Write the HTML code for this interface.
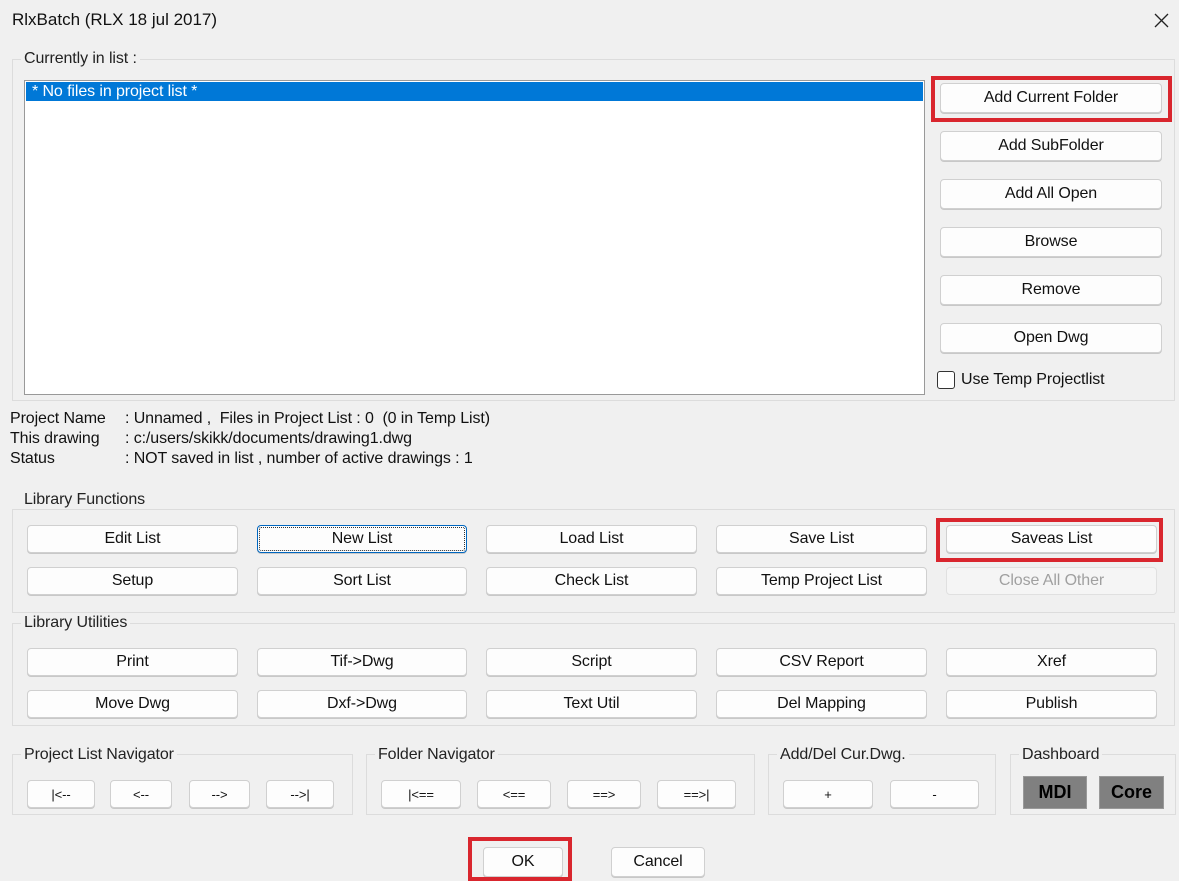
<!DOCTYPE html>
<html><head><meta charset="utf-8"><style>
*{box-sizing:border-box;margin:0;padding:0}
body{width:1179px;height:879px;background:#f0f0f0;font-family:"Liberation Sans",sans-serif;font-size:16px;color:#111;position:relative;overflow:hidden;letter-spacing:-0.1px}
.a{position:absolute}
.g{position:absolute;border:1px solid #dcdcdc}
.gl{position:absolute;background:#f0f0f0;padding:0 3px;color:#222;line-height:18px}
.b{position:absolute;background:#fdfdfd;border:1px solid #d0d0d0;border-radius:4px;text-align:center;color:#111;display:flex;align-items:center;justify-content:center;box-shadow:0 1px 0 #c8c8c8}
.r{position:absolute;border:4px solid #d9262e}
.t{position:absolute;white-space:nowrap;line-height:19px}
.d{position:absolute;background:#808080;border:1px solid #999;font-weight:bold;font-size:18px;display:flex;align-items:center;justify-content:center;color:#000;letter-spacing:0}
</style></head><body>
<div class="t" style="left:12px;top:10px;font-size:17px;letter-spacing:0">RlxBatch (RLX 18 jul 2017)</div>
<svg class="a" style="left:1154px;top:13px" width="15" height="15"><path d="M1 1L14 14M14 1L1 14" stroke="#222" stroke-width="1.3"/></svg>

<div class="g" style="left:12px;top:59px;width:1163px;height:342px"></div>
<div class="gl" style="left:21px;top:50px">Currently in list :</div>
<div class="a" style="left:24px;top:80px;width:901px;height:315px;background:#fff;border:1px solid #999"></div>
<div class="a" style="left:26px;top:82px;width:897px;height:19px;background:#0078d7"></div>
<div class="t" style="left:32px;top:82px;color:#fff">* No files in project list *</div>

<div class="b" style="left:940px;top:83px;width:222px;height:30px">Add Current Folder</div>
<div class="r" style="left:931px;top:76px;width:241px;height:46px"></div>
<div class="b" style="left:940px;top:131px;width:222px;height:30px">Add SubFolder</div>
<div class="b" style="left:940px;top:179px;width:222px;height:30px">Add All Open</div>
<div class="b" style="left:940px;top:227px;width:222px;height:30px">Browse</div>
<div class="b" style="left:940px;top:275px;width:222px;height:30px">Remove</div>
<div class="b" style="left:940px;top:323px;width:222px;height:30px">Open Dwg</div>
<div class="a" style="left:937px;top:371px;width:18px;height:18px;border:1px solid #333;background:#fff;border-radius:3px"></div>
<div class="t" style="left:961px;top:370px">Use Temp Projectlist</div>

<div class="t" style="left:10px;top:409px">Project Name</div>
<div class="t" style="left:10px;top:429px">This drawing</div>
<div class="t" style="left:10px;top:449px">Status</div>
<div class="t" style="left:125px;top:409px">: Unnamed ,&nbsp; Files in Project List : 0 &nbsp;(0 in Temp List)</div>
<div class="t" style="left:125px;top:429px">: c:/users/skikk/documents/drawing1.dwg</div>
<div class="t" style="left:125px;top:449px">: NOT saved in list , number of active drawings : 1</div>

<div class="g" style="left:12px;top:509px;width:1163px;height:104px"></div>
<div class="gl" style="left:21px;top:491px">Library Functions</div>
<div class="b" style="left:27px;top:525px;width:211px;height:28px">Edit List</div>
<div class="b" style="left:257px;top:525px;width:210px;height:28px;border-color:#0067c0;outline:1px dotted #333;outline-offset:-3px">New List</div>
<div class="b" style="left:486px;top:525px;width:211px;height:28px">Load List</div>
<div class="b" style="left:716px;top:525px;width:211px;height:28px">Save List</div>
<div class="b" style="left:946px;top:525px;width:211px;height:28px">Saveas List</div>
<div class="r" style="left:936px;top:518px;width:227px;height:44px"></div>
<div class="b" style="left:27px;top:567px;width:211px;height:28px">Setup</div>
<div class="b" style="left:257px;top:567px;width:210px;height:28px">Sort List</div>
<div class="b" style="left:486px;top:567px;width:211px;height:28px">Check List</div>
<div class="b" style="left:716px;top:567px;width:211px;height:28px">Temp Project List</div>
<div class="b" style="left:946px;top:567px;width:211px;height:28px;background:#f5f5f5;color:#a0a0a0;border-color:#e0e0e0;box-shadow:none">Close All Other</div>

<div class="g" style="left:12px;top:623px;width:1163px;height:103px"></div>
<div class="gl" style="left:21px;top:614px">Library Utilities</div>
<div class="b" style="left:27px;top:648px;width:211px;height:28px">Print</div>
<div class="b" style="left:257px;top:648px;width:210px;height:28px">Tif-&gt;Dwg</div>
<div class="b" style="left:486px;top:648px;width:211px;height:28px">Script</div>
<div class="b" style="left:716px;top:648px;width:211px;height:28px">CSV Report</div>
<div class="b" style="left:946px;top:648px;width:211px;height:28px">Xref</div>
<div class="b" style="left:27px;top:690px;width:211px;height:28px">Move Dwg</div>
<div class="b" style="left:257px;top:690px;width:210px;height:28px">Dxf-&gt;Dwg</div>
<div class="b" style="left:486px;top:690px;width:211px;height:28px">Text Util</div>
<div class="b" style="left:716px;top:690px;width:211px;height:28px">Del Mapping</div>
<div class="b" style="left:946px;top:690px;width:211px;height:28px">Publish</div>

<div class="g" style="left:12px;top:754px;width:341px;height:61px"></div>
<div class="gl" style="left:21px;top:746px">Project List Navigator</div>
<div class="b" style="left:27px;top:780px;width:68px;height:28px;font-size:13px">|&lt;--</div>
<div class="b" style="left:110px;top:780px;width:62px;height:28px;font-size:13px">&lt;--</div>
<div class="b" style="left:189px;top:780px;width:61px;height:28px;font-size:13px">--&gt;</div>
<div class="b" style="left:266px;top:780px;width:68px;height:28px;font-size:13px">--&gt;|</div>

<div class="g" style="left:366px;top:754px;width:389px;height:61px"></div>
<div class="gl" style="left:375px;top:746px">Folder Navigator</div>
<div class="b" style="left:381px;top:780px;width:80px;height:28px;font-size:13px">|&lt;==</div>
<div class="b" style="left:477px;top:780px;width:74px;height:28px;font-size:13px">&lt;==</div>
<div class="b" style="left:567px;top:780px;width:74px;height:28px;font-size:13px">==&gt;</div>
<div class="b" style="left:657px;top:780px;width:79px;height:28px;font-size:13px">==&gt;|</div>

<div class="g" style="left:768px;top:754px;width:228px;height:61px"></div>
<div class="gl" style="left:777px;top:746px">Add/Del Cur.Dwg.</div>
<div class="b" style="left:783px;top:780px;width:90px;height:28px;font-size:13px">+</div>
<div class="b" style="left:890px;top:780px;width:89px;height:28px;font-size:13px">-</div>

<div class="g" style="left:1010px;top:754px;width:166px;height:61px"></div>
<div class="gl" style="left:1019px;top:746px">Dashboard</div>
<div class="d" style="left:1023px;top:776px;width:64px;height:33px">MDI</div>
<div class="d" style="left:1099px;top:776px;width:65px;height:33px">Core</div>

<div class="b" style="left:483px;top:847px;width:80px;height:30px">OK</div>
<div class="r" style="left:468px;top:837px;width:104px;height:44px"></div>
<div class="b" style="left:611px;top:847px;width:94px;height:30px">Cancel</div>
</body></html>
